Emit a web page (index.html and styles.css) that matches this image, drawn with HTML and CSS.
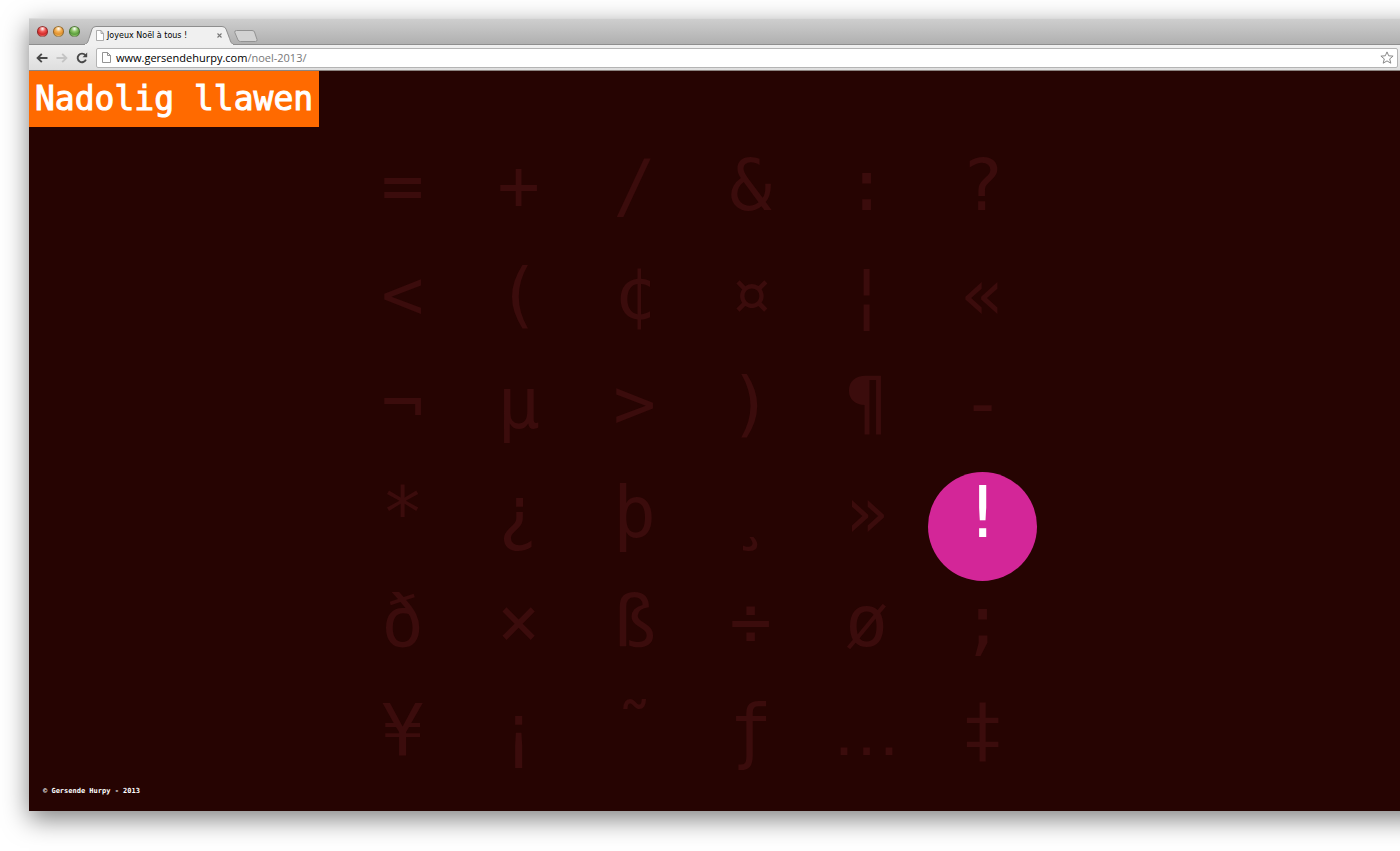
FILE: index.html
```html
<!DOCTYPE html>
<html lang="fr">
<head>
  <meta charset="UTF-8" />
  <title>Joyeux Noël à tous !</title>
  <link rel="stylesheet" href="styles.css">
</head>
<body>

  <div class="browser">
    <div class="tab-bar">
      <div class="lights">
        <button class="light red" aria-label="Fermer"></button>
        <button class="light yellow" aria-label="Réduire"></button>
        <button class="light green" aria-label="Agrandir"></button>
      </div>
      <div class="tab">
        <svg class="tab-shape" width="150" height="19" viewBox="0 0 150 19">
          <path d="M0 18.500C4 18 4 15 5.500 11L8 3Q9 .5 12 .5H138Q141 .5 142 3L145 11C146.500 15 147 18 150 18.500" fill="#f0f0f0" stroke="#8e8e8e"/>
          <path d="M1 18.500H149" stroke="#f0f0f0"/>
        </svg>
        <svg class="file" width="8" height="11" viewBox="0 0 8 11">
          <path d="M.5 .5H5L7.500 3.500V10.500H.5ZM5 .5V3.500H7.500" fill="#fff" stroke="#999" stroke-width=".8"/>
        </svg>
        <span class="tab-title">Joyeux Noël à tous !</span>
        <button class="tab-close" aria-label="Fermer l'onglet">
          <svg width="5" height="5" viewBox="0 0 5 5"><path d="M.5 .5L4.500 4.500M4.500 .5L.5 4.500" stroke="#777" stroke-width="1.100"/></svg>
        </button>
      </div>
      <button class="new-tab" aria-label="Nouvel onglet">
        <svg width="24" height="12" viewBox="0 0 24 12"><path d="M2.500 .5H18Q20 .5 20.500 2L23 9.500Q23.500 11.500 21.500 11.500H6.500Q4.500 11.500 4 10L.8 2.500Q.3 .5 2.500 .5Z" fill="#d2d2d2" stroke="#929292"/></svg>
      </button>
    </div>

    <div class="toolbar">
      <button class="tool" aria-label="Précédent">
        <svg width="12" height="10" viewBox="0 0 12 10"><path d="M11.500 5H1.800M5.800 .8L1.600 5L5.800 9.200" fill="none" stroke="#484848" stroke-width="1.900"/></svg>
      </button>
      <button class="tool" aria-label="Suivant">
        <svg width="12" height="10" viewBox="0 0 12 10"><path d="M.5 5H10.200M6.200 .8L10.400 5L6.200 9.200" fill="none" stroke="#c4c4c4" stroke-width="1.900"/></svg>
      </button>
      <button class="tool" aria-label="Actualiser">
        <svg width="12" height="12" viewBox="0 0 12 12"><path d="M9.300 3.200A4.300 4.300 0 1 0 9.900 7.600" fill="none" stroke="#484848" stroke-width="1.900"/><path d="M11.200 .6V5.300H6.500Z" fill="#484848"/></svg>
      </button>
      <div class="address">
        <svg class="file" width="9" height="11" viewBox="0 0 9 11">
          <path d="M.5 .5H5.500L8.500 3.500V10.500H.5ZM5.500 .5V3.500H8.500" fill="#fff" stroke="#888" stroke-width=".9"/>
        </svg>
        <label class="host" for="path">www.gersendehurpy.com</label>
        <input class="path" id="path" type="text" value="/noel-2013/">
        <button class="star" aria-label="Ajouter aux favoris">
          <svg width="14" height="13" viewBox="0 0 14 13"><path d="M7 .9L8.700 4.800L13.100 5.100L9.700 7.900L10.800 12.200L7 9.900L3.200 12.200L4.300 7.900L.9 5.100L5.300 4.800Z" fill="#fff" stroke="#888" stroke-width="1" stroke-linejoin="round"/></svg>
        </button>
      </div>
    </div>

    <main class="page">
      <h1 class="wish">Nadolig llawen</h1>
      <div class="glyphs">
        <button class="glyph">=</button>
        <button class="glyph">+</button>
        <button class="glyph">/</button>
        <button class="glyph">&amp;</button>
        <button class="glyph">:</button>
        <button class="glyph">?</button>

        <button class="glyph">&lt;</button>
        <button class="glyph">(</button>
        <button class="glyph">¢</button>
        <button class="glyph">¤</button>
        <button class="glyph">¦</button>
        <button class="glyph">«</button>

        <button class="glyph">¬</button>
        <button class="glyph">µ</button>
        <button class="glyph">&gt;</button>
        <button class="glyph">)</button>
        <button class="glyph">¶</button>
        <button class="glyph">-</button>

        <button class="glyph">*</button>
        <button class="glyph">¿</button>
        <button class="glyph">þ</button>
        <button class="glyph">¸</button>
        <button class="glyph">»</button>
        <button class="glyph active">!</button>

        <button class="glyph">ð</button>
        <button class="glyph">×</button>
        <button class="glyph">ß</button>
        <button class="glyph">÷</button>
        <button class="glyph">ø</button>
        <button class="glyph">;</button>

        <button class="glyph">¥</button>
        <button class="glyph">¡</button>
        <button class="glyph">˜</button>
        <button class="glyph">ƒ</button>
        <button class="glyph wide">…</button>
        <button class="glyph">‡</button>
      </div>
      <footer class="credit">© Gersende Hurpy - 2013</footer>
    </main>
  </div>

</body>
</html>
```

FILE: styles.css
```css
* {
  box-sizing: border-box;
}

body {
  margin: 0;
  padding: 18px 0 40px 29px;
  background-color: #fff;
  overflow-x: hidden;
}

button {
  padding: 0;
  border: none;
  background: none;
  cursor: pointer;
}

svg {
  display: block;
}

/* the window runs off the right side of the screen */
.browser {
  margin-right: -40px;
  box-shadow: 0 8px 24px rgba(0, 0, 0, 0.5);
  font-family: "Open Sans", "Noto Sans", sans-serif;
}

.tab-bar {
  display: flex;
  align-items: flex-end;
  height: 27px;
  padding-left: 8px;
  background: linear-gradient(#cecece, #b0b0b0);
  border-top: 1px solid #dadada;
  border-bottom: 1px solid #8e8e8e;
}

.lights {
  display: flex;
  gap: 5px;
  padding-bottom: 7px;
}

.light {
  width: 11px;
  height: 11px;
  border-radius: 50%;
  border: 1px solid rgba(0, 0, 0, 0.35);
}

.red {
  background: radial-gradient(circle at 50% 20%, #fff 0, #ef5a56 35%, #d42a2a 65%, #ff8a80);
}

.yellow {
  background: radial-gradient(circle at 50% 20%, #fff 0, #f5b254 35%, #e09030 65%, #ffe080);
}

.green {
  background: radial-gradient(circle at 50% 20%, #fff 0, #8cc466 35%, #5a9e3c 65%, #b8ea8a);
}

.tab {
  position: relative;
  display: flex;
  align-items: center;
  width: 150px;
  height: 19px;
  margin-left: 4px;
  margin-bottom: -1px;
  padding: 0 12px;
}

.tab-shape {
  position: absolute;
  left: 0;
  top: 0;
}

.tab .file,
.tab-title,
.tab-close {
  position: relative;
}

.tab-title {
  flex: 1;
  margin-left: 3px;
  font-family: "DejaVu Sans", sans-serif;
  font-size: 8px;
  line-height: 12px;
  color: #000;
}

.new-tab {
  margin-bottom: 2px;
}

.toolbar {
  display: flex;
  align-items: center;
  gap: 8px;
  height: 26px;
  padding: 0 42px 0 7px;
  background: linear-gradient(#f0f0f0, #dedede);
  border-bottom: 1px solid #8c8480;
}

.address {
  flex: 1;
  display: flex;
  align-items: center;
  height: 20px;
  padding: 0 3px 0 5px;
  background-color: #fff;
  border: 1px solid #b4b4b4;
  border-radius: 2px;
  font-size: 11px;
}

.host {
  margin-left: 5px;
  color: #000;
}

.path {
  flex: 1;
  padding: 0;
  border: none;
  outline: none;
  font: inherit;
  color: #777;
}

.page {
  position: relative;
  padding-bottom: 12px;
  background-color: #260402;
  font-family: "DejaVu Sans Mono", monospace;
}

.wish {
  width: max-content;
  margin: 0 0 18px;
  padding: 0 6px;
  background-color: #ff6a00;
  color: #fff;
  font-size: 33px;
  font-weight: normal;
  line-height: 56px;
  -webkit-text-stroke: 1px #fff;
}

.glyphs {
  display: grid;
  grid-template-columns: repeat(6, 109px);
  column-gap: 7px;
  margin-left: 319px;
}

.glyph {
  height: 109px;
  padding-bottom: 28px;
  border-radius: 50%;
  color: #3b0c0c;
  font-family: inherit;
  font-size: 71px;
  line-height: 81px;
}

.glyph.wide {
  font-family: "Liberation Sans", sans-serif;
}

.glyph:hover,
.glyph.active {
  background-color: #d32698;
  color: #fff;
}

.credit {
  position: absolute;
  left: 14px;
  bottom: 14px;
  color: #fff;
  font-size: 7px;
  font-weight: bold;
  line-height: 12px;
}
```
